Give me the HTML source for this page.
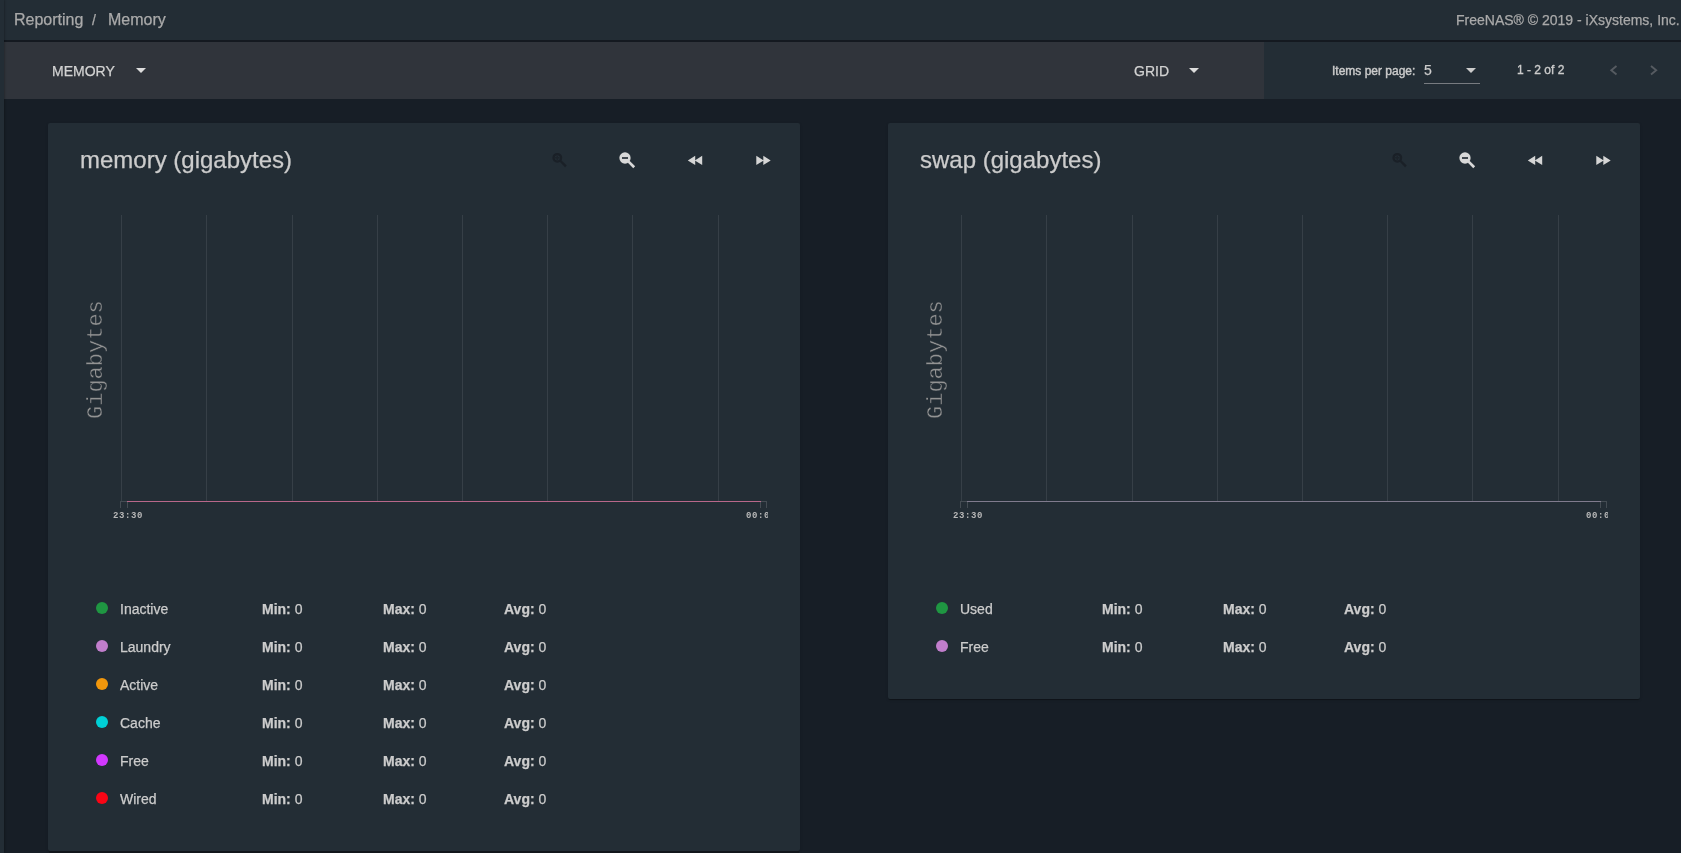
<!DOCTYPE html>
<html>
<head>
<meta charset="utf-8">
<style>
html,body{margin:0;padding:0;}
body{width:1681px;height:853px;overflow:hidden;position:relative;background:#171e26;font-family:"Liberation Sans",sans-serif;}
.abs{position:absolute;white-space:nowrap;will-change:transform;}
.tx{-webkit-text-stroke:.25px currentColor;}
#strip{left:0;top:0;width:4px;height:853px;background:#232d35;box-shadow:1px 0 2px rgba(0,0,0,.22);}
#topbar{left:4px;top:0;width:1677px;height:40px;background:#232d35;}
#topline{left:4px;top:40px;width:1677px;height:2px;background:#141920;}
#tbl{left:4px;top:42px;width:1260px;height:57px;background:#30343b;}
#tbr{left:1264px;top:42px;width:417px;height:57px;background:#232d35;}
.crumb{font-size:16px;color:#aaaaaa;line-height:18px;}
.foot{font-size:14px;color:#aaaaaa;line-height:16px;}
.tbtxt{font-size:14px;color:#d2d2d2;line-height:16px;}
.tri{width:0;height:0;border-left:5px solid transparent;border-right:5px solid transparent;border-top:5px solid #dddddd;}
.card{background:#232d35;border-radius:2px;box-shadow:0 2px 1px -1px rgba(0,0,0,.2),0 1px 1px 0 rgba(0,0,0,.14),0 1px 3px 0 rgba(0,0,0,.12);}
.title{font-size:24px;color:#cccccc;line-height:28px;}
.grid{width:1px;background:#363f47;}
.ylab{font-family:"Liberation Mono",monospace;font-size:22px;color:#939393;-webkit-text-stroke:.4px #232d35;line-height:25px;transform:rotate(-90deg);transform-origin:0 0;}
.xlab{font-family:"Liberation Mono",monospace;font-size:9px;font-weight:bold;letter-spacing:.6px;color:#b8b8b8;line-height:11px;}
.dot{width:12px;height:12px;border-radius:50%;}
.lg{font-size:14px;color:#cccccc;line-height:16px;}
.lg b{font-weight:bold;}
</style>
</head>
<body>
<div class="abs" id="topbar"></div>
<div class="abs" id="topline"></div>
<div class="abs" id="tbl"></div>
<div class="abs" id="tbr"></div>
<div class="abs" id="strip"></div>

<div class="abs crumb tx" style="left:14px;top:11px;">Reporting</div><div class="abs crumb tx" style="left:91.7px;top:11px;font-size:14px;">/</div><div class="abs crumb tx" style="left:107.7px;top:11px;">Memory</div>
<div class="abs foot tx" style="left:1456px;top:12px;">FreeNAS® © 2019 - iXsystems, Inc.</div>

<div class="abs tbtxt tx" style="left:52px;top:63px;">MEMORY</div>
<div class="abs tri" style="left:136px;top:68px;"></div>
<div class="abs tbtxt tx" style="left:1133.5px;top:63px;">GRID</div>
<div class="abs tri" style="left:1189px;top:68px;"></div>

<div class="abs tx" style="left:1332px;top:64px;font-size:12px;color:#cccccc;line-height:14px;-webkit-text-stroke:.4px #cccccc;">Items per page:</div>
<div class="abs tx" style="left:1424px;top:62.5px;font-size:14px;color:#cccccc;line-height:14px;">5</div>
<div class="abs tri" style="left:1466px;top:68px;border-top-color:#cccccc;"></div>
<div class="abs" style="left:1424px;top:83px;width:56px;height:1px;background:#777b80;"></div>
<div class="abs tx" style="left:1516.5px;top:63px;font-size:12px;color:#cccccc;line-height:14px;-webkit-text-stroke:.35px #cccccc;">1 - 2 of 2</div>
<svg class="abs" style="left:1605px;top:60px;" width="16" height="20" viewBox="0 0 16 20"><polyline points="11.5,6 6.3,10.3 11.5,14.6" fill="none" stroke="#565b61" stroke-width="1.9"/></svg>
<svg class="abs" style="left:1646px;top:60px;" width="16" height="20" viewBox="0 0 16 20"><polyline points="5,6 10.2,10.3 5,14.6" fill="none" stroke="#565b61" stroke-width="1.9"/></svg>

<!-- CARD 1 -->
<div class="abs card" style="left:48px;top:123px;width:752px;height:728px;"></div>
<div class="abs title tx" style="left:80px;top:146px;">memory (gigabytes)</div>
<svg class="abs" style="left:545px;top:145px;" width="100" height="30" viewBox="545 145 100 30"><circle cx="557.3" cy="157.8" r="3.75" fill="none" stroke="#1a2027" stroke-width="2.3"/><path d="M555.2 157.8h4.2M557.3 155.7v4.2" stroke="#1c232a" stroke-width="1.4"/><path d="M560.3 160.8l5.6 5.6" stroke="#1a2027" stroke-width="2.3"/><circle cx="625" cy="158" r="5.65" fill="#d8d8d8"/><rect x="622" y="157" width="6" height="2" fill="#40474e"/><path d="M628.6 161.6l5.6 5.6" stroke="#d8d8d8" stroke-width="2.7"/></svg><svg class="abs" style="left:680px;top:148px;" width="100" height="24" viewBox="680 148 100 24"><path d="M695.2 155.7v9.4l-7.4-4.7zM702.2 155.7v9.4l-7.4-4.7z" fill="#d5d5d5"/><path d="M756.3 155.7v9.4l7.4-4.7zM763.3 155.7v9.4l7.4-4.7z" fill="#d5d5d5"/></svg>
<div class="abs grid" style="left:121px;top:215px;height:286px;"></div><div class="abs grid" style="left:206px;top:215px;height:286px;"></div><div class="abs grid" style="left:292px;top:215px;height:286px;"></div><div class="abs grid" style="left:377px;top:215px;height:286px;"></div><div class="abs grid" style="left:462px;top:215px;height:286px;"></div><div class="abs grid" style="left:547px;top:215px;height:286px;"></div><div class="abs grid" style="left:632px;top:215px;height:286px;"></div><div class="abs grid" style="left:718px;top:215px;height:286px;"></div>
<div class="abs" style="left:120px;top:501px;width:8px;height:1px;background:#444c53;"></div><div class="abs" style="left:120px;top:501px;width:1px;height:7px;background:#444c53;"></div><div class="abs" style="left:127px;top:501px;width:1px;height:7px;background:#444c53;"></div><div class="abs" style="left:760px;top:501px;width:7px;height:1px;background:#444c53;"></div><div class="abs" style="left:760px;top:501px;width:1px;height:7px;background:#444c53;"></div><div class="abs" style="left:766px;top:501px;width:1px;height:7px;background:#444c53;"></div><div class="abs" style="left:127px;top:501px;width:634px;height:1px;background:#b8678a;"></div>
<div class="abs xlab" style="left:113px;top:511px;">23:30</div><div class="abs xlab" style="left:746px;top:511px;width:22px;overflow:hidden;">00:00</div>
<div class="abs ylab" style="left:84px;top:418.5px;">Gigabytes</div>
<div class="abs dot" style="left:96px;top:602px;background:#1f9642;"></div><div class="abs lg tx" style="left:120px;top:601px;">Inactive</div><div class="abs lg tx" style="left:262px;top:601px;"><b>Min:</b> 0</div><div class="abs lg tx" style="left:383px;top:601px;"><b>Max:</b> 0</div><div class="abs lg tx" style="left:504px;top:601px;"><b>Avg:</b> 0</div>
<div class="abs dot" style="left:96px;top:640px;background:#c17ecc;"></div><div class="abs lg tx" style="left:120px;top:639px;">Laundry</div><div class="abs lg tx" style="left:262px;top:639px;"><b>Min:</b> 0</div><div class="abs lg tx" style="left:383px;top:639px;"><b>Max:</b> 0</div><div class="abs lg tx" style="left:504px;top:639px;"><b>Avg:</b> 0</div>
<div class="abs dot" style="left:96px;top:678px;background:#f2970c;"></div><div class="abs lg tx" style="left:120px;top:677px;">Active</div><div class="abs lg tx" style="left:262px;top:677px;"><b>Min:</b> 0</div><div class="abs lg tx" style="left:383px;top:677px;"><b>Max:</b> 0</div><div class="abs lg tx" style="left:504px;top:677px;"><b>Avg:</b> 0</div>
<div class="abs dot" style="left:96px;top:716px;background:#00d0d6;"></div><div class="abs lg tx" style="left:120px;top:715px;">Cache</div><div class="abs lg tx" style="left:262px;top:715px;"><b>Min:</b> 0</div><div class="abs lg tx" style="left:383px;top:715px;"><b>Max:</b> 0</div><div class="abs lg tx" style="left:504px;top:715px;"><b>Avg:</b> 0</div>
<div class="abs dot" style="left:96px;top:754px;background:#d238ff;"></div><div class="abs lg tx" style="left:120px;top:753px;">Free</div><div class="abs lg tx" style="left:262px;top:753px;"><b>Min:</b> 0</div><div class="abs lg tx" style="left:383px;top:753px;"><b>Max:</b> 0</div><div class="abs lg tx" style="left:504px;top:753px;"><b>Avg:</b> 0</div>
<div class="abs dot" style="left:96px;top:792px;background:#fa0515;"></div><div class="abs lg tx" style="left:120px;top:791px;">Wired</div><div class="abs lg tx" style="left:262px;top:791px;"><b>Min:</b> 0</div><div class="abs lg tx" style="left:383px;top:791px;"><b>Max:</b> 0</div><div class="abs lg tx" style="left:504px;top:791px;"><b>Avg:</b> 0</div>
<div class="abs" style="left:49px;top:851px;width:750px;height:2px;background:#12161b;"></div>
<!-- CARD 2 -->
<div class="abs card" style="left:888px;top:123px;width:752px;height:576px;"></div>
<div class="abs title tx" style="left:920px;top:146px;">swap (gigabytes)</div>
<svg class="abs" style="left:1385px;top:145px;" width="100" height="30" viewBox="545 145 100 30"><circle cx="557.3" cy="157.8" r="3.75" fill="none" stroke="#1a2027" stroke-width="2.3"/><path d="M555.2 157.8h4.2M557.3 155.7v4.2" stroke="#1c232a" stroke-width="1.4"/><path d="M560.3 160.8l5.6 5.6" stroke="#1a2027" stroke-width="2.3"/><circle cx="625" cy="158" r="5.65" fill="#d8d8d8"/><rect x="622" y="157" width="6" height="2" fill="#40474e"/><path d="M628.6 161.6l5.6 5.6" stroke="#d8d8d8" stroke-width="2.7"/></svg><svg class="abs" style="left:1520px;top:148px;" width="100" height="24" viewBox="680 148 100 24"><path d="M695.2 155.7v9.4l-7.4-4.7zM702.2 155.7v9.4l-7.4-4.7z" fill="#d5d5d5"/><path d="M756.3 155.7v9.4l7.4-4.7zM763.3 155.7v9.4l7.4-4.7z" fill="#d5d5d5"/></svg>
<div class="abs grid" style="left:961px;top:215px;height:286px;"></div><div class="abs grid" style="left:1046px;top:215px;height:286px;"></div><div class="abs grid" style="left:1132px;top:215px;height:286px;"></div><div class="abs grid" style="left:1217px;top:215px;height:286px;"></div><div class="abs grid" style="left:1302px;top:215px;height:286px;"></div><div class="abs grid" style="left:1387px;top:215px;height:286px;"></div><div class="abs grid" style="left:1472px;top:215px;height:286px;"></div><div class="abs grid" style="left:1558px;top:215px;height:286px;"></div>
<div class="abs" style="left:960px;top:501px;width:8px;height:1px;background:#444c53;"></div><div class="abs" style="left:960px;top:501px;width:1px;height:7px;background:#444c53;"></div><div class="abs" style="left:967px;top:501px;width:1px;height:7px;background:#444c53;"></div><div class="abs" style="left:1600px;top:501px;width:7px;height:1px;background:#444c53;"></div><div class="abs" style="left:1600px;top:501px;width:1px;height:7px;background:#444c53;"></div><div class="abs" style="left:1606px;top:501px;width:1px;height:7px;background:#444c53;"></div><div class="abs" style="left:967px;top:501px;width:634px;height:1px;background:#807b8e;"></div>
<div class="abs xlab" style="left:953px;top:511px;">23:30</div><div class="abs xlab" style="left:1586px;top:511px;width:22px;overflow:hidden;">00:00</div>
<div class="abs ylab" style="left:924px;top:418.5px;">Gigabytes</div>
<div class="abs dot" style="left:936px;top:602px;background:#1f9642;"></div><div class="abs lg tx" style="left:960px;top:601px;">Used</div><div class="abs lg tx" style="left:1102px;top:601px;"><b>Min:</b> 0</div><div class="abs lg tx" style="left:1223px;top:601px;"><b>Max:</b> 0</div><div class="abs lg tx" style="left:1344px;top:601px;"><b>Avg:</b> 0</div>
<div class="abs dot" style="left:936px;top:640px;background:#c17ecc;"></div><div class="abs lg tx" style="left:960px;top:639px;">Free</div><div class="abs lg tx" style="left:1102px;top:639px;"><b>Min:</b> 0</div><div class="abs lg tx" style="left:1223px;top:639px;"><b>Max:</b> 0</div><div class="abs lg tx" style="left:1344px;top:639px;"><b>Avg:</b> 0</div>
</body>
</html>
